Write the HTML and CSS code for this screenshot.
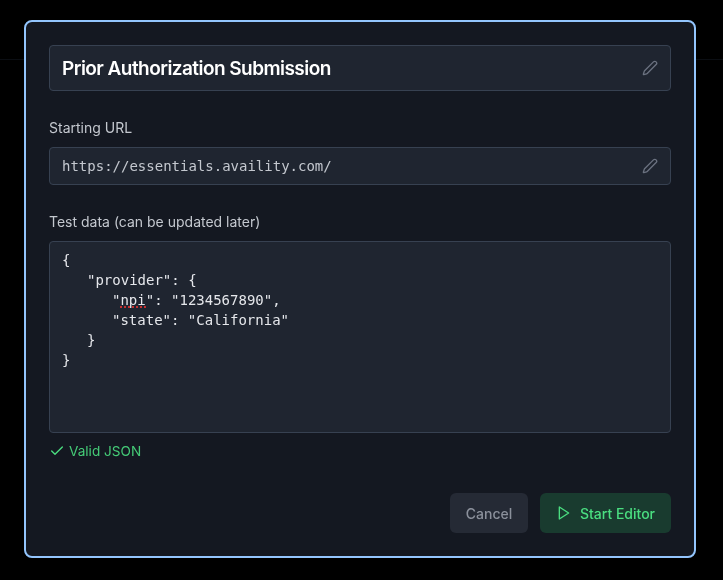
FILE: index.html
```html
<!DOCTYPE html>
<html lang="en">
<head>
<meta charset="utf-8">
<title>Prior Authorization Submission</title>
<link rel="stylesheet" href="styles.css">
</head>
<body>
<div class="backdrop">
  <div class="header-line"></div>
  <main class="dialog">
    <div class="field title-field">
      <span class="title-text">Prior Authorization Submission</span>
      <svg class="pencil" viewBox="0 0 24 24" aria-hidden="true"><path d="M21.174 6.812a1 1 0 0 0-3.986-3.987L3.842 16.174a2 2 0 0 0-.5.83l-1.321 4.352a.5.5 0 0 0 .623.622l4.353-1.32a2 2 0 0 0 .83-.497z"/></svg>
    </div>
    <label class="label url-label">Starting URL</label>
    <div class="field url-field">
      <span class="mono url-text">https://essentials.availity.com/</span>
      <svg class="pencil" viewBox="0 0 24 24" aria-hidden="true"><path d="M21.174 6.812a1 1 0 0 0-3.986-3.987L3.842 16.174a2 2 0 0 0-.5.83l-1.321 4.352a.5.5 0 0 0 .623.622l4.353-1.32a2 2 0 0 0 .83-.497z"/></svg>
    </div>
    <label class="label data-label">Test data (can be updated later)</label>
    <div class="editor mono"><div>{</div><div class="i1">"provider": {</div><div class="i2">"<span class="squiggle">npi</span>": "1234567890",</div><div class="i2">"state": "California"</div><div class="i1">}</div><div>}</div></div>
    <div class="valid">
      <svg class="check" viewBox="0 0 24 24" aria-hidden="true"><path d="M20 6 9 17l-5-5"/></svg>
      <span class="valid-text">Valid JSON</span>
    </div>
    <div class="actions">
      <button class="btn cancel">Cancel</button>
      <button class="btn start">
        <svg class="play" viewBox="0 0 24 24" aria-hidden="true"><path d="M5 3l14 9-14 9V3z"/></svg>
        <span>Start Editor</span>
      </button>
    </div>
  </main>
</div>
</body>
</html>
```
FILE: styles.css
```css
* { box-sizing: border-box; }
html, body { margin: 0; height: 100%; }
body { background: #000; font-family: Inter, "Liberation Sans", sans-serif; overflow: hidden; }
.backdrop { position: relative; width: 723px; height: 580px; padding: 20px 27px 22px 24px; }
.header-line { position: absolute; left: 0; right: 0; top: 59px; height: 1px; background: #0b0e13; }
.dialog {
  position: relative;
  display: flex;
  flex-direction: column;
  width: 672px;
  height: 538px;
  padding: 23px;
  background: #141821;
  border: 2px solid #93c5fd;
  border-radius: 8px;
  will-change: transform;
}
.field {
  display: flex;
  align-items: center;
  justify-content: space-between;
  background: #1f2530;
  border: 1px solid #374151;
  border-radius: 4px;
  padding: 0 12px;
}
.title-field { height: 46px; }
.title-text { color: #fff; font-size: 19px; font-weight: 600; letter-spacing: -0.55px; }
.url-field { height: 38px; }
.mono { font-family: "DejaVu Sans Mono", "Liberation Mono", monospace; font-size: 14px; }
.url-text { color: #c4c8cf; }
.pencil { width: 16px; height: 16px; fill: none; stroke: #6b7280; stroke-width: 2; stroke-linecap: round; stroke-linejoin: round; }
.label { display: block; color: #c4c8cf; font-size: 14px; line-height: 20px; }
.url-label { margin-top: 27px; margin-bottom: 9px; }
.data-label { margin-top: 27px; margin-bottom: 9px; }
.editor {
  height: 192px;
  padding: 8px 12px;
  background: #1f2530;
  border: 1px solid #374151;
  border-radius: 4px;
  color: #e5e7eb;
  line-height: 20px;
}
.i1 { padding-left: 25px; }
.i2 { padding-left: 50px; }
.squiggle { position: relative; }
.squiggle::after {
  content: "";
  position: absolute;
  left: 0;
  right: 0;
  bottom: 0;
  height: 2px;
  background: repeating-linear-gradient(90deg, #c53030 0 2px, transparent 2px 4px);
}
.valid { display: flex; align-items: center; gap: 4px; margin-top: 8px; color: #4ade80; line-height: 20px; }
.valid-text { font-size: 13.6px; opacity: .9; }
.check { width: 16px; height: 16px; fill: none; stroke: currentColor; stroke-width: 2; stroke-linecap: round; stroke-linejoin: round; }
.actions { display: flex; justify-content: flex-end; gap: 12px; margin-top: auto; }
.btn { height: 40px; border: 0; border-radius: 6px; font-family: inherit; font-size: 14px; font-weight: 500; display: flex; align-items: center; justify-content: center; }
.cancel { width: 78px; background: #252a35; color: #8b909b; }
.start { width: 131px; gap: 8px; background: #193b2f; color: #4ade80; }
.play { width: 16px; height: 16px; fill: none; stroke: currentColor; stroke-width: 2; stroke-linecap: round; stroke-linejoin: round; }
```
